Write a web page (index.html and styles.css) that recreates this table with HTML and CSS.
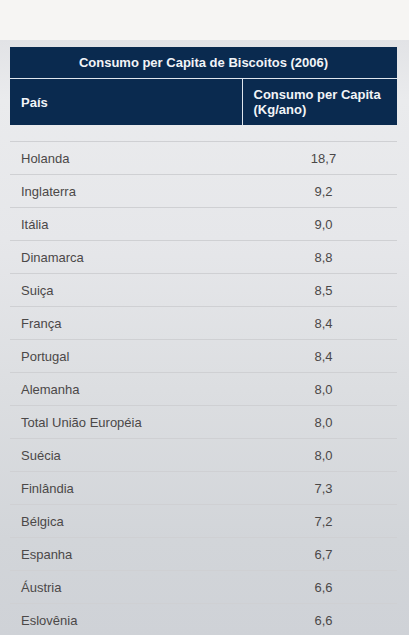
FILE: index.html
```html
<!DOCTYPE html>
<html lang="pt">
<head>
<meta charset="utf-8">
<link rel="stylesheet" href="styles.css">
</head>
<body>
<div class="topband"></div>
<div class="panel">
  <table class="data">
    <colgroup><col class="c-left"><col class="c-right"></colgroup>
    <thead>
      <tr><th class="title" colspan="2">Consumo per Capita de Biscoitos (2006)</th></tr>
      <tr><th class="h-left">País</th><th class="h-right">Consumo per Capita<br>(Kg/ano)</th></tr>
    </thead>
    <tbody>
      <tr class="spacer"><td></td><td></td></tr>
      <tr><td>Holanda</td><td class="num">18,7</td></tr>
      <tr><td>Inglaterra</td><td class="num">9,2</td></tr>
      <tr><td>Itália</td><td class="num">9,0</td></tr>
      <tr><td>Dinamarca</td><td class="num">8,8</td></tr>
      <tr><td>Suiça</td><td class="num">8,5</td></tr>
      <tr><td>França</td><td class="num">8,4</td></tr>
      <tr><td>Portugal</td><td class="num">8,4</td></tr>
      <tr><td>Alemanha</td><td class="num">8,0</td></tr>
      <tr><td>Total União Européia</td><td class="num">8,0</td></tr>
      <tr><td>Suécia</td><td class="num">8,0</td></tr>
      <tr><td>Finlândia</td><td class="num">7,3</td></tr>
      <tr><td>Bélgica</td><td class="num">7,2</td></tr>
      <tr><td>Espanha</td><td class="num">6,7</td></tr>
      <tr><td>Áustria</td><td class="num">6,6</td></tr>
      <tr><td>Eslovênia</td><td class="num">6,6</td></tr>
    </tbody>
  </table>
</div>
</body>
</html>
```
FILE: styles.css
```css
html, body {
  margin: 0;
  padding: 0;
}
body {
  width: 409px;
  height: 635px;
  overflow: hidden;
  font-family: Arial, "Liberation Sans", sans-serif;
  background: #d3d6da;
}
.topband {
  height: 40px;
  background: #f6f5f3;
}
.panel {
  padding: 7px 12px 0 10px;
  height: 595px;
  box-sizing: border-box;
  background: linear-gradient(180deg, #e2e3e6 0px, #eaebed 60px, #e6e7ea 200px, #dcdee1 350px, #d2d5d9 500px, #cfd2d7 595px);
}
.data {
  width: 387px;
  border-collapse: collapse;
  table-layout: fixed;
}
.c-left {
  width: 232px;
}
.data th {
  background: #0a2a4f;
  color: #f2f4f7;
  font-weight: bold;
  font-size: 13px;
  padding: 0;
}
.title {
  height: 31px;
  text-align: center;
  border-bottom: 1px solid #dfe6ee;
}
.h-left {
  height: 46px;
  text-align: left;
  padding-left: 11px !important;
  border-right: 1px solid #dfe6ee;
}
.h-right {
  text-align: left;
  padding-left: 11px !important;
  line-height: 15px;
}
.data td {
  height: 31px;
  padding: 1px 0 0 11px;
  font-size: 13px;
  color: #4b4848;
  border-bottom: 1px solid #cfd0d3;
}
.data tr.spacer td {
  height: 15px;
}
.data td.num {
  text-align: center;
  padding: 1px 0 0 8px;
}
```
